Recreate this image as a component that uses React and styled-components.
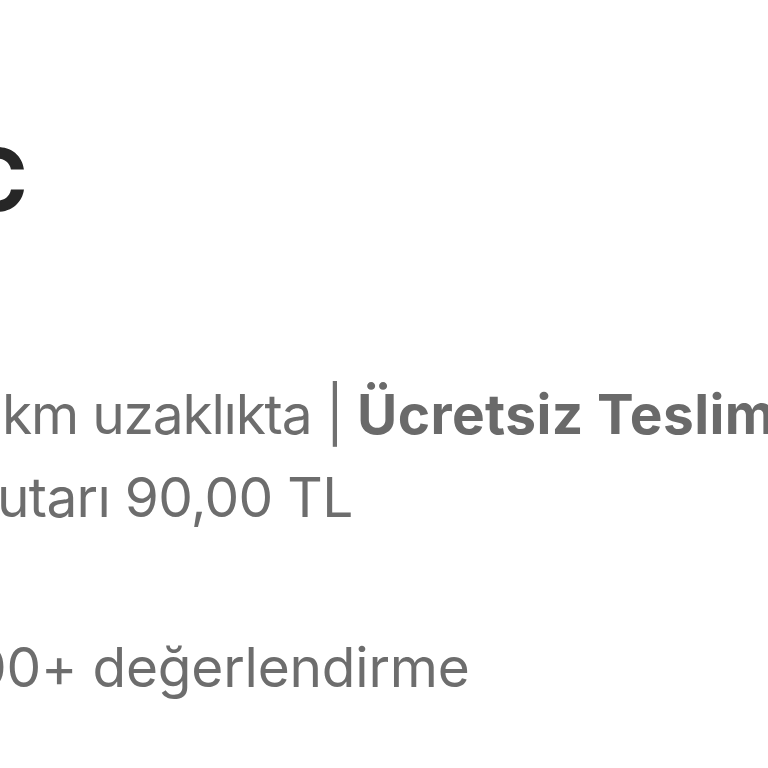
import React from "react";
import styled, { createGlobalStyle } from "styled-components";

const Global = createGlobalStyle`
  html, body {
    margin: 0;
    padding: 0;
    background: #ffffff;
    width: 768px;
    height: 768px;
    overflow: hidden;
  }
  body {
    font-family: Inter, "Noto Sans", "Liberation Sans", sans-serif;
    -webkit-font-smoothing: antialiased;
  }
`;

const Page = styled.main`
  width: 768px;
  height: 768px;
  overflow: hidden;
  display: flex;
  flex-direction: column;
  padding-top: 128px;
  box-sizing: border-box;
`;

const StoreName = styled.h1`
  margin: 0 0 0 ${(p) => p.$shift}px;
  font-size: 86px;
  line-height: 104px;
  font-weight: 700;
  color: #262626;
  white-space: nowrap;
  letter-spacing: -1px;
`;

const InfoBlock = styled.section`
  display: flex;
  flex-direction: column;
  margin-top: ${(p) => p.$gap}px;
`;

const InfoLine = styled.p`
  margin: 0 0 0 ${(p) => p.$shift}px;
  font-size: 55px;
  line-height: 83px;
  font-weight: 400;
  color: #6d6d6d;
  white-space: nowrap;
  letter-spacing: ${(p) => p.$track}px;
`;

const Divider = styled.span`
  font-weight: 400;
  color: #707070;
`;

const Strong = styled.strong`
  font-weight: 700;
  color: #6a6a6a;
  letter-spacing: 0.4px;
`;

export default function App() {
  return (
    <>
      <Global />
      <Page>
        <StoreName $shift={-36}>C</StoreName>
        <InfoBlock $gap={141}>
          <InfoLine $shift={2} $track={-1.2}>
            km uzaklıkta <Divider>|</Divider> <Strong>Ücretsiz Teslimat</Strong>
          </InfoLine>
          <InfoLine $shift={-3} $track={-0.7}>utarı 90,00 TL</InfoLine>
        </InfoBlock>
        <InfoBlock $gap={87}>
          <InfoLine $shift={-28} $track={-0.2}>00+ değerlendirme</InfoLine>
        </InfoBlock>
      </Page>
    </>
  );
}
